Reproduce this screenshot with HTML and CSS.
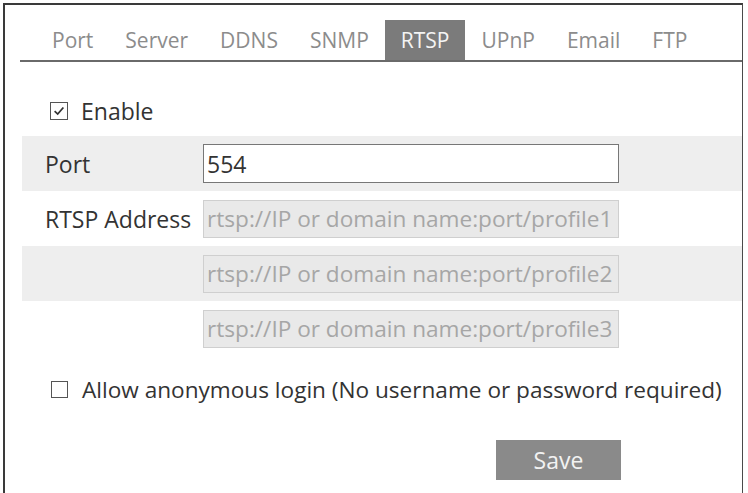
FILE: index.html
```html
<!DOCTYPE html>
<html>
<head>
<meta charset="utf-8">
<link rel="stylesheet" href="styles.css">
</head>
<body>
<div class="frame">
  <div class="tabs">
    <span class="tab">Port</span>
    <span class="tab">Server</span>
    <span class="tab">DDNS</span>
    <span class="tab">SNMP</span>
    <span class="tab active">RTSP</span>
    <span class="tab">UPnP</span>
    <span class="tab">Email</span>
    <span class="tab">FTP</span>
  </div>
  <div class="enable">
    <span class="cb"><svg viewBox="0 0 16 16" width="14" height="14"><path d="M3 8.2 L6.5 11.5 L13 4" fill="none" stroke="#333" stroke-width="2"/></svg></span>
    <span class="cb-label">Enable</span>
  </div>
  <div class="rows">
    <div class="row gray">
      <span class="label">Port</span>
      <div class="field">554</div>
    </div>
    <div class="row">
      <span class="label">RTSP Address</span>
      <div class="field disabled">rtsp://IP or domain name:port/profile1</div>
    </div>
    <div class="row gray">
      <span class="label"></span>
      <div class="field disabled">rtsp://IP or domain name:port/profile2</div>
    </div>
    <div class="row">
      <span class="label"></span>
      <div class="field disabled">rtsp://IP or domain name:port/profile3</div>
    </div>
  </div>
  <div class="anon">
    <span class="cb small"></span>
    <span class="anon-label">Allow anonymous login (No username or password required)</span>
  </div>
  <div class="actions">
    <button class="save">Save</button>
  </div>
</div>
</body>
</html>
```
FILE: styles.css
```css
html, body {
  margin: 0;
  padding: 0;
  background: #fff;
}
body {
  font-family: "Open Sans", "Noto Sans", sans-serif;
  color: #333;
  width: 748px;
  height: 493px;
  overflow: hidden;
}
.frame {
  margin: 3px 0 0 3px;
  width: 740px;
  height: 500px;
  border-top: 2px solid #3a3a3a;
  border-left: 2px solid #3a3a3a;
  border-right: 1px solid #4a4a4a;
  padding: 15px 0 0 15px;
  box-sizing: border-box;
}
.tabs {
  display: flex;
  height: 40px;
  border-bottom: 2px solid #6a6a6a;
  padding-left: 16px;
}
.tab {
  display: flex;
  align-items: center;
  padding: 0 16px;
  font-size: 21px;
  color: #8c8c8c;
}
.tab.active {
  background: #7b7b7b;
  color: #f4f4f4;
}
.enable {
  display: flex;
  align-items: center;
  margin: 38px 0 0 30px;
  height: 22px;
}
.cb {
  width: 18px;
  height: 18px;
  border: 1.5px solid #555;
  box-sizing: border-box;
  display: flex;
  align-items: center;
  justify-content: center;
  background: #fff;
}
.cb svg { display: block; }
.cb-label {
  margin-left: 13px;
  font-size: 23px;
}
.rows {
  margin-top: 14px;
  margin-left: 2px;
}
.row {
  display: flex;
  align-items: center;
  height: 55px;
}
.row.gray { background: #eeeeee; }
.label {
  width: 181px;
  padding-left: 23px;
  box-sizing: border-box;
  font-size: 23px;
  color: #333;
  white-space: nowrap;
}
.field {
  width: 416px;
  height: 39px;
  box-sizing: border-box;
  border: 1.5px solid #777;
  background: #fff;
  font-size: 23px;
  padding-left: 3px;
  display: flex;
  align-items: center;
  color: #333;
  white-space: nowrap;
  overflow: hidden;
}
.field.disabled {
  border: 1px solid #cfcfcf;
  background: #e9e9e9;
  color: #a6a6a6;
  height: 38px;
  font-size: 22.6px;
}
.anon {
  display: flex;
  align-items: center;
  margin: 22px 0 0 31px;
  height: 22px;
}
.cb.small {
  width: 17px;
  height: 17px;
}
.anon-label {
  margin-left: 14px;
  font-size: 22.6px;
  white-space: nowrap;
}
.actions {
  display: flex;
  padding-left: 476px;
  margin-top: 40px;
}
.save {
  width: 125px;
  height: 40px;
  border: none;
  background: #8a8a8a;
  color: #f2f2f2;
  font-family: "Open Sans", "Noto Sans", sans-serif;
  font-size: 23px;
  padding: 0;
}
```
